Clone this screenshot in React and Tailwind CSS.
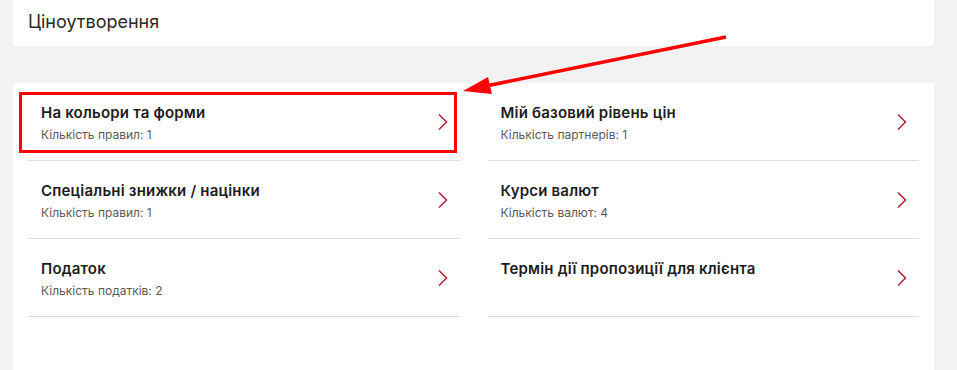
import { ChevronRight } from 'lucide-react'

const LEFT = [
  { title: 'На кольори та форми', sub: 'Кількість правил: 1' },
  { title: 'Спеціальні знижки / націнки', sub: 'Кількість правил: 1' },
  { title: 'Податок', sub: 'Кількість податків: 2' },
]

const RIGHT = [
  { title: 'Мій базовий рівень цін', sub: 'Кількість партнерів: 1' },
  { title: 'Курси валют', sub: 'Кількість валют: 4' },
  { title: 'Термін дії пропозиції для клієнта', sub: null },
]

function Row({ title, sub }) {
  return (
    <div className="relative h-[78px] border-b border-[#dcdcdc] pl-[13px] pr-[12px] pt-[20px] flex cursor-pointer">
      <div className="flex-1">
        <p className="text-[15px] leading-5 font-semibold text-[#1c1c1c] tracking-[0.2px]">{title}</p>
        {sub && <p className="mt-[4px] text-[12px] leading-4 text-[#5a5a5a]">{sub}</p>}
      </div>
      <div className="absolute right-[10px] top-0 bottom-0 flex items-center">
        <svg width="14" height="18" viewBox="0 0 14 18" fill="none">
          <path d="M3 1.5 L10.5 9 L3 16.5" stroke="#b51c33" strokeWidth="1.5" />
        </svg>
      </div>
    </div>
  )
}

export default function App() {
  return (
    <div className="relative min-h-[370px] bg-[#f2f2f2] pl-[13px] pr-[23px] overflow-hidden" style={{ fontFamily: 'Inter, "Noto Sans", sans-serif' }}>
      {/* header card */}
      <div className="h-[46px] bg-white rounded-b-[3px] px-[15px] flex items-center">
        <h1 className="text-[18px] text-[#2a2a2a] font-normal -mt-[4px]">Ціноутворення</h1>
      </div>

      {/* settings card */}
      <div className="mt-[37px] bg-white rounded-t-[3px] px-[15px] pb-[60px] grid grid-cols-2 gap-x-[28px]">
        <div>
          {LEFT.map(r => <Row key={r.title} {...r} />)}
        </div>
        <div>
          {RIGHT.map(r => <Row key={r.title} {...r} />)}
        </div>
      </div>

      {/* annotation: highlight box */}
      <div className="absolute left-[19px] top-[92px] w-[438px] h-[61px] border-[3px] border-[#ff0000] pointer-events-none" />

      {/* annotation: arrow */}
      <svg className="absolute left-0 top-0 pointer-events-none" width="957" height="370">
        <line x1="726" y1="37" x2="486" y2="86" stroke="#ff0000" strokeWidth="3.5" />
        <polygon points="463,91 488,77 492,94" fill="#ff0000" />
      </svg>
    </div>
  )
}
